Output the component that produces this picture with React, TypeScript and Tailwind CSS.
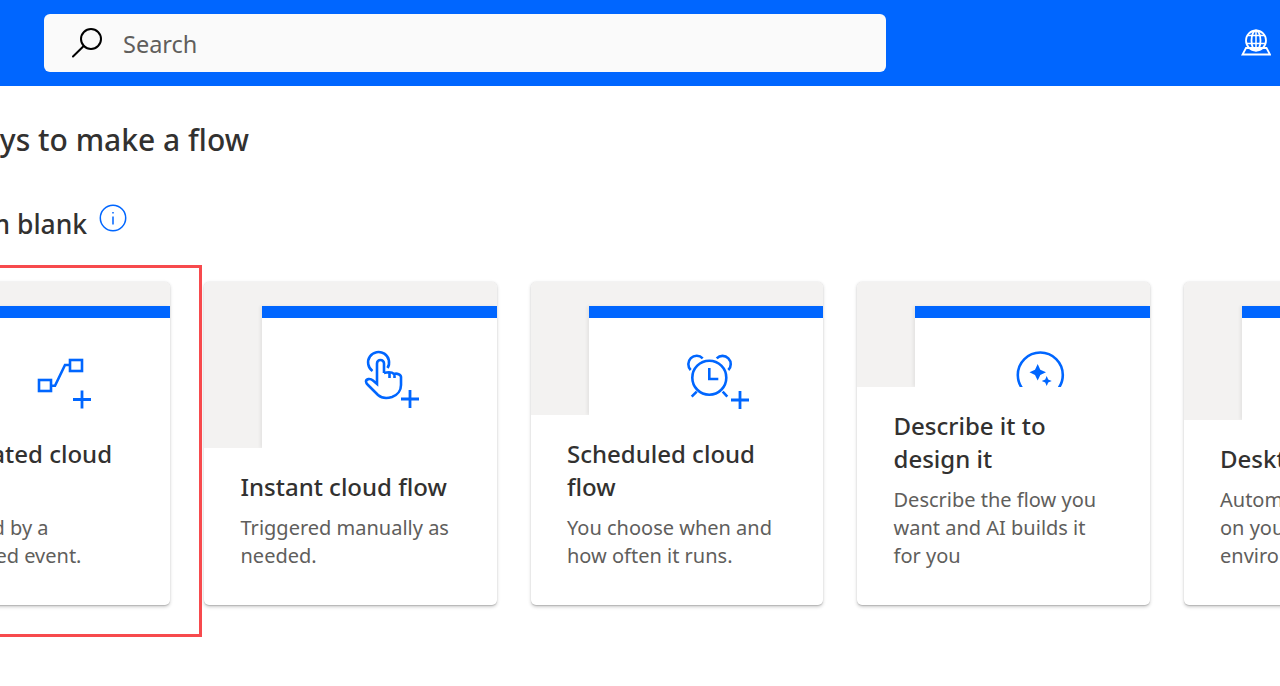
const blue = '#0066ff'

function Plus({ x, y }: { x: number; y: number }) {
  return <path d={`M${x - 9} ${y}H${x + 9}M${x} ${y - 9}V${y + 9}`} strokeWidth={2.8} />
}

function FlowIcon() {
  return (
    <>
      <rect x={31} y={40} width={12} height={11} />
      <rect x={62} y={20} width={12} height={11} />
      <path d="M43.500 45.700H47L57 25H62" />
      <Plus x={74} y={59.500} />
    </>
  )
}

function HandIcon() {
  return (
    <>
      <path d="M38.500 31A10.500 10.500 0 1 1 53.500 28" />
      <path d="M50 33V23.500A3.500 3.500 0 0 0 43 23.500V44L39 40.500C36 38 32 39 32 41.500C32 43 33 44 34 45L44 55C48 58.500 53 58.500 58 57C64 55 67 50 67 45V37C67 34.500 63 33 60 34C58 32 54 32 50 33M55.500 33V38M60.500 34V38" />
      <Plus x={76} y={59} />
    </>
  )
}

function ClockIcon() {
  return (
    <>
      <circle cx={48.300} cy={37.700} r={17} />
      <path d="M48.300 28V39H57.300M30.700 56.700L35.700 51.700M66.300 56.700L61.700 51.700" />
      <path d="M29.700 30A7.500 7.500 0 0 1 41.700 18.300M55.700 18.300A7.500 7.500 0 0 1 67.300 30" />
      <Plus x={79} y={60} />
    </>
  )
}

function SparkleIcon() {
  return (
    <>
      <circle cx={53.300} cy={35} r={22.500} />
      <path fill={blue} stroke="none" d="M50.700 24L53.300 29.700L59 32.300L53.300 35L50.700 40.500L48 35L42.500 32.300L48 29.700Z" />
      <path fill={blue} stroke="none" d="M59.700 36L61.200 39.500L64.700 41L61.200 42.500L59.700 46L58.200 42.500L54.700 41L58.200 39.500Z" />
    </>
  )
}

const cards = [
  { title: 'Automated cloud flow', text: 'Triggered by a designated event.', icon: <FlowIcon /> },
  { title: 'Instant cloud flow', text: 'Triggered manually as needed.', icon: <HandIcon /> },
  { title: 'Scheduled cloud flow', text: 'You choose when and how often it runs.', icon: <ClockIcon /> },
  { title: 'Describe it to design it', text: 'Describe the flow you want and AI builds it for you', icon: <SparkleIcon /> },
  { title: 'Desktop flow', text: 'Automate processes on your desktop environment.', icon: null },
]

function FlowCard({ title, text, icon }: { title: string; text: string; icon: React.ReactNode }) {
  return (
    <div className="w-[292.500px] h-[323px] shrink-0 flex flex-col rounded-[5px] overflow-hidden bg-white shadow-[0_1.600px_3.600px_rgba(0,0,0,0.2),0_0.300px_0.900px_rgba(0,0,0,0.14)]">
      <div className="flex-1 min-h-0 bg-[#f3f2f1] pt-6 pl-[58px] flex overflow-hidden">
        <div className="flex-1 bg-white border-t-[12px] border-[#0066ff] overflow-hidden flex justify-center pt-[22px] shadow-[-2px_0_3px_rgba(0,0,0,0.06)]">
          <svg width={90} height={90} viewBox="0 0 90 90" fill="none" stroke={blue} strokeWidth={2.600} className="shrink-0">
            {icon}
          </svg>
        </div>
      </div>
      <div className="pt-[22px] pb-[35px] pl-[36.500px] pr-9">
        <h3 className="text-[24px] leading-[33px] font-medium text-[#323130] mb-[11px]">{title}</h3>
        <p className="text-[20px] leading-[28px] text-[#605e5c]">{text}</p>
      </div>
    </div>
  )
}

export default function App() {
  return (
    <div className="relative w-[1280px] h-[686px] overflow-hidden bg-white font-['Noto_Sans','Liberation_Sans',sans-serif]">
      <header className="h-[86px] bg-[#0066ff] flex items-center justify-between pl-11 pr-[9px]">
        <div className="w-[842px] h-[58px] rounded-md bg-[#fafafa] flex items-center pl-7 gap-[21px]">
          <svg width={30} height={30} viewBox="0 0 30 30" fill="none" stroke="#000" strokeWidth={2}>
            <circle cx={19} cy={11} r={10} />
            <path d="M1 28.500L11.700 18" strokeLinecap="round" />
          </svg>
          <span className="text-[23.500px] text-[#605e5c] pt-1">Search</span>
        </div>
        <svg width={30} height={30} viewBox="0 0 30 30" fill="none" stroke="#fff" strokeWidth={1.800} className="mt-[2px]">
          <circle cx={15} cy={11.500} r={10} />
          <ellipse cx={15} cy={11.500} rx={4.500} ry={10} />
          <path d="M6 6.500H24M5.500 14.500H24.500M15 1.500V21.500" strokeWidth={1.500} />
          <path d="M5 19H25.500L29 25.500H1.500Z" />
        </svg>
      </header>

      <main className="ml-[-122.500px]">
        <h1 className="mt-[32px] ml-[-9px] text-[30px] leading-[44px] font-medium text-[#323130] whitespace-nowrap">Three ways to make a flow</h1>
        <div className="mt-[44px] ml-[3px] flex items-start gap-3">
          <h2 className="text-[26.500px] leading-[36px] font-medium text-[#323130] whitespace-nowrap">Start from blank</h2>
          <svg width={28} height={28} viewBox="0 0 28 28" fill="none" stroke={blue} strokeWidth={1.500} className="shrink-0 mt-[-2px]">
            <circle cx={14} cy={14} r={12.700} />
            <path d="M14 12.500V20.500M14 8V9.500" />
          </svg>
        </div>
        <div className="mt-[40px] flex gap-[34px]">
          {cards.map(c => <FlowCard key={c.title} {...c} />)}
        </div>
      </main>

      <div className="absolute top-[265px] left-[-20px] w-[222px] h-[372px] border-[3px] border-[#f74a4d]" />
    </div>
  )
}
